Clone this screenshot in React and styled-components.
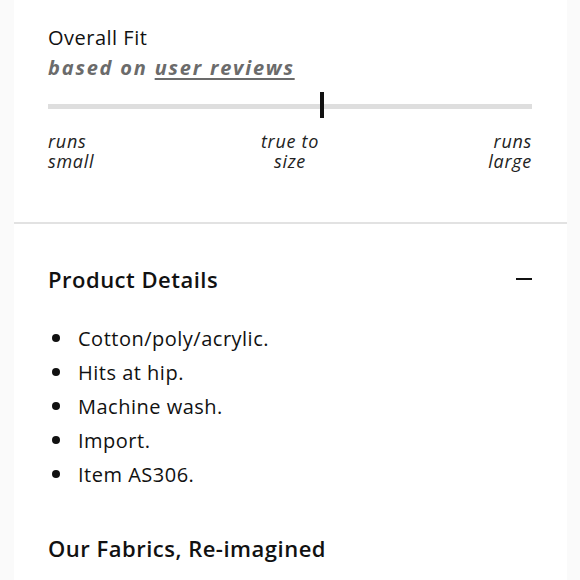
import styled, { createGlobalStyle } from "styled-components";

const Global = createGlobalStyle`
  html, body {
    margin: 0;
    padding: 0;
    background: #fafafa;
  }
  body {
    font-family: "Open Sans", "Noto Sans", sans-serif;
    color: #111;
  }
`;

const Page = styled.div`
  margin: 0 13px 0 14px;
  background: #fff;
  height: 580px;
  overflow: hidden;
`;

const FitSection = styled.section`
  padding: 25px 34px 0 34px;
  height: 197px;
  border-bottom: 2px solid #e2e2e2;
`;

const FitTitle = styled.h3`
  margin: 0;
  font-size: 20px;
  font-weight: 400;
  letter-spacing: 0.5px;
  line-height: 26px;
  color: #111;
`;

const FitSub = styled.div`
  margin-top: 4px;
  font-size: 20px;
  font-weight: 700;
  font-style: italic;
  letter-spacing: 1.8px;
  color: #6b6b6b;
  line-height: 26px;

  a {
    color: inherit;
    text-decoration: underline;
    text-underline-offset: 3px;
    text-decoration-thickness: 2px;
  }
`;

const Track = styled.div`
  position: relative;
  margin-top: 23px;
  width: 484px;
  height: 5px;
  background: #dedede;
`;

const Marker = styled.span`
  position: absolute;
  top: -12px;
  width: 4px;
  height: 26px;
  background: #111;
`;

const Labels = styled.div`
  display: flex;
  justify-content: space-between;
  width: 484px;
  margin-top: 22px;
`;

const Label = styled.div`
  font-size: 18px;
  font-style: italic;
  letter-spacing: 0.7px;
  line-height: 20px;
  white-space: pre-line;
  color: #222;
  text-align: ${(p) => p.$align};
  width: 110px;
`;

const DetailsSection = styled.section`
  padding: 41px 34px 0 34px;
`;

const HeaderRow = styled.div`
  display: flex;
  justify-content: space-between;
  align-items: center;
  width: 484px;
`;

const SectionTitle = styled.h2`
  margin: 0;
  font-size: 22px;
  font-weight: 600;
  letter-spacing: 0.5px;
  line-height: 28px;
  color: #111;
`;

const Minus = styled.span`
  display: block;
  width: 16px;
  height: 2px;
  background: #111;
`;

const List = styled.ul`
  list-style: none;
  margin: 28px 0 0 0;
  padding: 0;
`;

const Item = styled.li`
  display: flex;
  align-items: center;
  height: 34px;
  font-size: 20px;
  letter-spacing: 0.5px;
  color: #111;

  &::before {
    content: "";
    width: 8px;
    height: 8px;
    border-radius: 50%;
    background: #111;
    margin: 0 18px 0 4px;
  }
`;

const NextTitle = styled(SectionTitle)`
  margin-top: 43px;
`;

const items = [
  "Cotton/poly/acrylic.",
  "Hits at hip.",
  "Machine wash.",
  "Import.",
  "Item AS306.",
];

const labels = [
  { text: "runs\nsmall", align: "left" },
  { text: "true to\nsize", align: "center" },
  { text: "runs\nlarge", align: "right" },
];

export default function App() {
  return (
    <>
      <Global />
      <Page>
        <FitSection>
          <FitTitle>Overall Fit</FitTitle>
          <FitSub>
            based on <a>user reviews</a>
          </FitSub>
          <Track>
            <Marker style={{ left: "56.2%" }} />
          </Track>
          <Labels>
            {labels.map((l) => (
              <Label key={l.text} $align={l.align}>
                {l.text}
              </Label>
            ))}
          </Labels>
        </FitSection>
        <DetailsSection>
          <HeaderRow>
            <SectionTitle>Product Details</SectionTitle>
            <Minus />
          </HeaderRow>
          <List>
            {items.map((t) => (
              <Item key={t}>{t}</Item>
            ))}
          </List>
          <NextTitle>Our Fabrics, Re-imagined</NextTitle>
        </DetailsSection>
      </Page>
    </>
  );
}
